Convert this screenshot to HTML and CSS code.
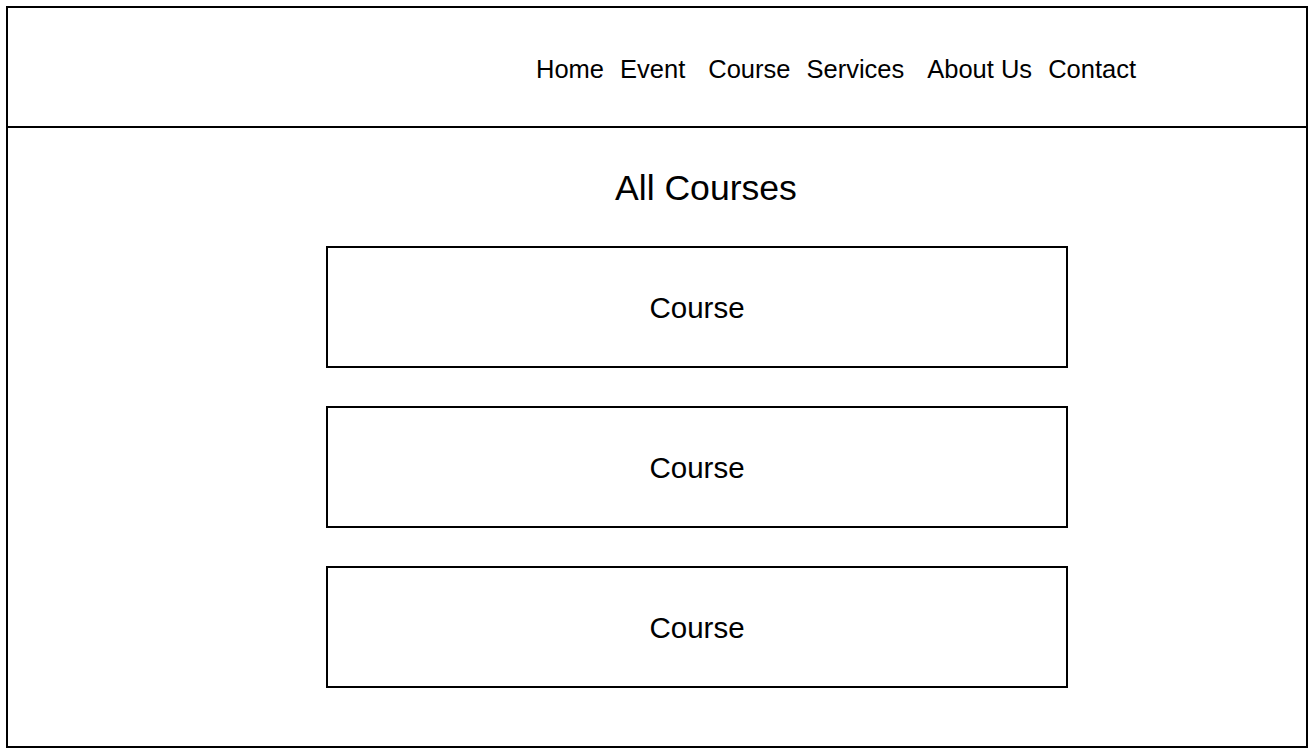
FILE: index.html
```html
<!DOCTYPE html>
<html>
<head>
<meta charset="utf-8">
<title>All Courses</title>
<link rel="stylesheet" href="styles.css">
</head>
<body>
<div class="frame">
  <header class="header">
    <nav class="nav">
      <a class="nav-item" href="#">Home</a>
      <a class="nav-item" href="#">Event</a>
      <a class="nav-item nav-item--wide" href="#">Course</a>
      <a class="nav-item" href="#">Services</a>
      <a class="nav-item nav-item--wide" href="#">About Us</a>
      <a class="nav-item" href="#">Contact</a>
    </nav>
  </header>
  <main class="main">
    <h1 class="title">All Courses</h1>
    <div class="cards">
      <div class="card">Course</div>
      <div class="card">Course</div>
      <div class="card">Course</div>
    </div>
  </main>
</div>
</body>
</html>
```
FILE: styles.css
```css
html, body {
  margin: 0;
  padding: 0;
  background: #ffffff;
}
body {
  font-family: "Liberation Sans", Arial, Helvetica, sans-serif;
  color: #000000;
}
.frame {
  box-sizing: border-box;
  margin: 6px;
  width: 1302px;
  height: 742px;
  border: 2px solid #000000;
}
.header {
  box-sizing: border-box;
  height: 120px;
  border-bottom: 2px solid #000000;
  padding: 49px 0 0 528px;
}
.nav {
  display: flex;
  gap: 16px;
}
.nav-item {
  font-size: 25.5px;
  line-height: 1;
  color: #000000;
  text-decoration: none;
  white-space: nowrap;
}
.nav-item--wide {
  margin-left: 7px;
}
.main {
  padding-top: 42px;
}
.title {
  margin: 0;
  padding-left: 607px;
  font-size: 35.6px;
  font-weight: normal;
  line-height: 36px;
}
.cards {
  display: flex;
  flex-direction: column;
  gap: 38px;
  margin-top: 40px;
  margin-left: 318px;
}
.card {
  box-sizing: border-box;
  width: 742px;
  height: 122px;
  border: 2px solid #000000;
  display: flex;
  align-items: center;
  justify-content: center;
  font-size: 29.5px;
  line-height: 1;
  padding-top: 1px;
}
```
